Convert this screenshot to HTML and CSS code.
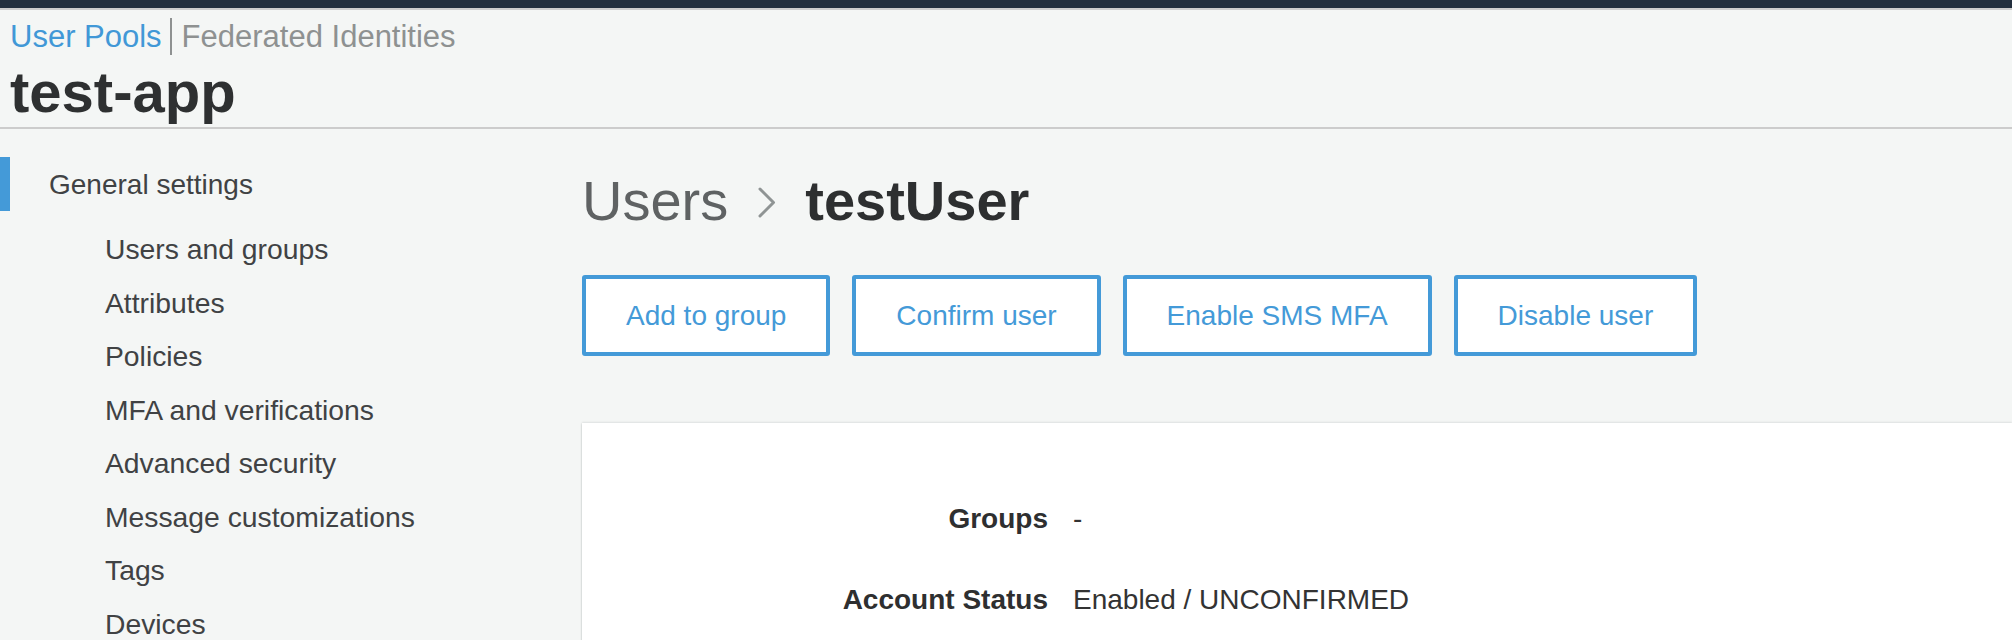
FILE: index.html
```html
<!DOCTYPE html>
<html lang="en">
<head>
<meta charset="utf-8">
<title>test-app - User Pools</title>
<link rel="stylesheet" href="styles.css">
</head>
<body>
<div class="topbar"></div>
<header class="pool-header">
  <nav class="tabs">
    <a class="tab tab-active" href="#">User Pools</a>
    <span class="tab-sep"></span>
    <a class="tab" href="#">Federated Identities</a>
  </nav>
  <h1 class="pool-name">test-app</h1>
</header>
<div class="layout">
  <aside class="sidebar">
    <div class="side-section">General settings</div>
    <ul class="side-list">
      <li>Users and groups</li>
      <li>Attributes</li>
      <li>Policies</li>
      <li>MFA and verifications</li>
      <li>Advanced security</li>
      <li>Message customizations</li>
      <li>Tags</li>
      <li>Devices</li>
    </ul>
  </aside>
  <main class="main">
    <h2 class="crumbs">
      <span class="crumb-parent">Users</span>
      <svg class="chev" width="18" height="31" viewBox="0 0 18 31"><polyline points="2,2 15.5,15.5 2,29" fill="none" stroke="#8f9494" stroke-width="3" stroke-linecap="round" stroke-linejoin="round"/></svg>
      <span class="crumb-current">testUser</span>
    </h2>
    <div class="actions">
      <button class="btn">Add to group</button>
      <button class="btn">Confirm user</button>
      <button class="btn">Enable SMS MFA</button>
      <button class="btn">Disable user</button>
    </div>
    <section class="card">
      <dl class="details">
        <dt>Groups</dt><dd>-</dd>
        <dt>Account Status</dt><dd>Enabled / UNCONFIRMED</dd>
      </dl>
    </section>
  </main>
</div>
</body>
</html>
```

FILE: styles.css
```css
html, body {
  margin: 0;
  padding: 0;
  height: 640px;
  overflow: hidden;
}
body {
  background: #f4f6f5;
  font-family: "Liberation Sans", Arial, Helvetica, sans-serif;
  color: #404244;
}
.topbar {
  height: 8px;
  background: #232f3e;
  border-bottom: 2px solid #cccccc;
}
.pool-header {
  padding: 0 0 0 10px;
  border-bottom: 2px solid #cccccc;
  height: 117px;
}
.tabs {
  display: flex;
  align-items: center;
  height: 50px;
  padding-top: 3px;
  box-sizing: border-box;
}
.tab {
  font-size: 31px;
  text-decoration: none;
  color: #8e9191;
  line-height: 36px;
}
.tab-active {
  color: #4198d7;
}
.tab-sep {
  width: 2px;
  height: 37px;
  background: #8e9191;
  margin: 0 10px 0 8px;
}
.pool-name {
  margin: 0;
  font-size: 58px;
  font-weight: bold;
  color: #2e3031;
  line-height: 64px;
}
.layout {
  display: flex;
}
.sidebar {
  width: 582px;
  flex: none;
  padding-top: 28px;
}
.side-section {
  height: 54px;
  line-height: 56px;
  font-size: 28px;
  border-left: 10px solid #449ad8;
  padding-left: 39px;
  color: #404244;
}
.side-list {
  list-style: none;
  margin: 12px 0 0;
  padding: 0 0 0 105px;
}
.side-list li {
  font-size: 28.3px;
  line-height: 53.5px;
  color: #404244;
}
.main {
  flex: 1;
  min-width: 0;
  padding-top: 38px;
}
.crumbs {
  margin: 0;
  display: flex;
  align-items: center;
  font-size: 56px;
  line-height: 68px;
  font-weight: normal;
}
.crumb-parent {
  color: #5f6263;
}
.chev {
  margin: 0 29px 0 30px;
  position: relative;
  top: 1px;
}
.crumb-current {
  font-weight: bold;
  color: #2d2f30;
}
.actions {
  display: flex;
  gap: 22px;
  margin-top: 40px;
}
.btn {
  font-family: inherit;
  font-size: 28px;
  line-height: 33px;
  padding: 20px 40px;
  border: 4px solid #449ad8;
  border-radius: 3px;
  background: #ffffff;
  color: #449ad8;
  cursor: pointer;
}
.card {
  margin-top: 67px;
  background: #ffffff;
  box-shadow: 0 1px 2px rgba(0, 28, 36, 0.25), 0 -1px 2px rgba(0, 28, 36, 0.08);
  padding: 76px 0 80px;
  min-height: 200px;
}
.details {
  display: grid;
  grid-template-columns: 466px 1fr;
  column-gap: 25px;
  row-gap: 41px;
  margin: 0;
  font-size: 28px;
  line-height: 40px;
}
.details dt {
  font-weight: bold;
  text-align: right;
  color: #2e2f30;
}
.details dd {
  margin: 0;
  color: #333333;
}
```
